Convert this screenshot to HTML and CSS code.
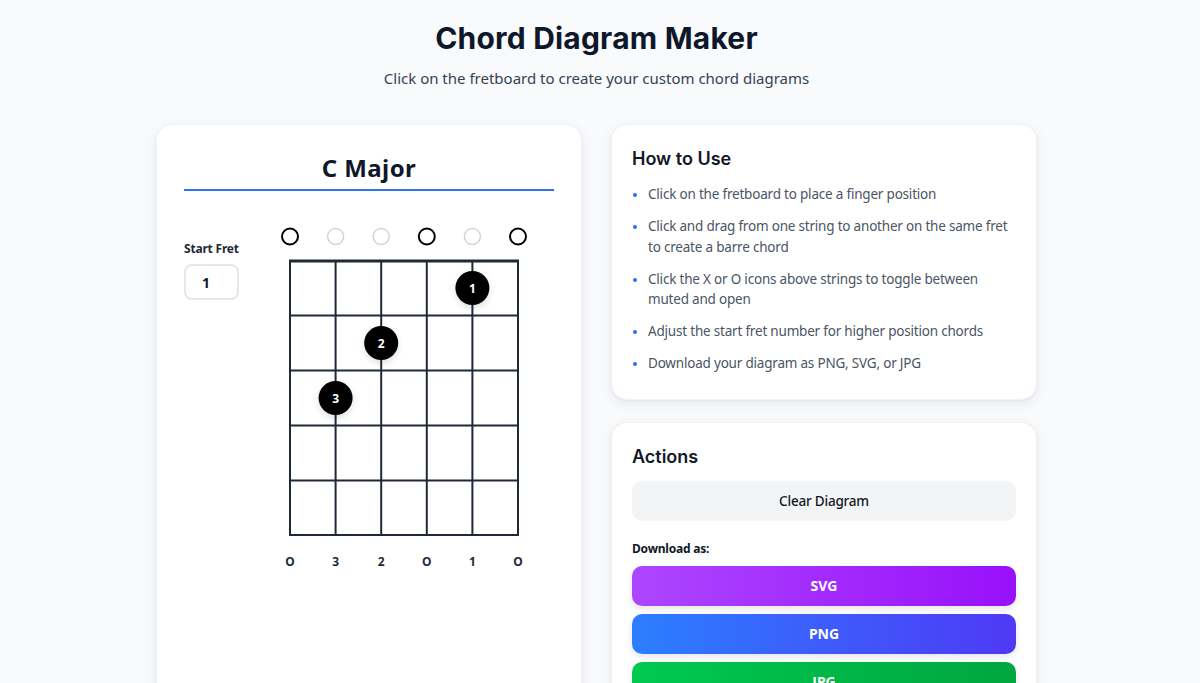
FILE: index.html
```html
<!DOCTYPE html>
<html lang="en">
<head>
<meta charset="utf-8">
<title>Chord Diagram Maker</title>
<link rel="stylesheet" href="styles.css">
</head>
<body>
<div class="page">
  <header class="hero">
    <h1 class="hero-title">Chord Diagram Maker</h1>
    <p class="hero-sub">Click on the fretboard to create your custom chord diagrams</p>
  </header>
  <main class="layout">
    <section class="card card-diagram">
      <h2 class="chord-name">C Major</h2>
      <div class="diagram-row">
        <div class="fret-control">
          <label class="fret-label" for="startFret">Start Fret</label>
          <input class="fret-input" id="startFret" type="text" value="1">
        </div>
        <svg class="fretboard" width="270" height="360" viewBox="0 0 270 360" xmlns="http://www.w3.org/2000/svg">
          <defs>
            <filter id="dotShadow" x="-50%" y="-50%" width="200%" height="200%">
              <feDropShadow dx="0" dy="3" stdDeviation="3" flood-color="#000" flood-opacity="0.12"/>
            </filter>
          </defs>
          <g class="open-marks">
            <circle cx="20" cy="16.5" r="8" fill="none" stroke="#000" stroke-width="2"/>
            <circle cx="65.6" cy="16.5" r="8" fill="none" stroke="#d1d5db" stroke-width="1.5"/>
            <circle cx="111.2" cy="16.5" r="8" fill="none" stroke="#d1d5db" stroke-width="1.5"/>
            <circle cx="156.8" cy="16.5" r="8" fill="none" stroke="#000" stroke-width="2"/>
            <circle cx="202.4" cy="16.5" r="8" fill="none" stroke="#d1d5db" stroke-width="1.5"/>
            <circle cx="248" cy="16.5" r="8" fill="none" stroke="#000" stroke-width="2"/>
          </g>
          <g stroke="#1f2937" stroke-width="2">
            <line x1="20" y1="41" x2="20" y2="316"/>
            <line x1="65.6" y1="41" x2="65.6" y2="316"/>
            <line x1="111.2" y1="41" x2="111.2" y2="316"/>
            <line x1="156.8" y1="41" x2="156.8" y2="316"/>
            <line x1="202.4" y1="41" x2="202.4" y2="316"/>
            <line x1="248" y1="41" x2="248" y2="316"/>
            <line x1="19" y1="95.5" x2="249" y2="95.5"/>
            <line x1="19" y1="150.5" x2="249" y2="150.5"/>
            <line x1="19" y1="205.5" x2="249" y2="205.5"/>
            <line x1="19" y1="260.5" x2="249" y2="260.5"/>
            <line x1="19" y1="315" x2="249" y2="315"/>
            <line x1="19" y1="41" x2="249" y2="41" stroke-width="3"/>
          </g>
          <g filter="url(#dotShadow)">
            <circle cx="202.4" cy="68" r="17" fill="#000"/>
            <circle cx="111.2" cy="123" r="17" fill="#000"/>
            <circle cx="65.6" cy="178" r="17" fill="#000"/>
          </g>
          <g class="dot-text">
            <text x="202.4" y="68">1</text>
            <text x="111.2" y="123">2</text>
            <text x="65.6" y="178">3</text>
          </g>
          <g class="string-labels">
            <text x="20" y="341">O</text>
            <text x="65.6" y="341">3</text>
            <text x="111.2" y="341">2</text>
            <text x="156.8" y="341">O</text>
            <text x="202.4" y="341">1</text>
            <text x="248" y="341">O</text>
          </g>
        </svg>
      </div>
    </section>
    <div class="side">
      <section class="card card-side card-help">
        <h3 class="side-title">How to Use</h3>
        <ul class="steps">
          <li class="step">Click on the fretboard to place a finger position</li>
          <li class="step">Click and drag from one string to another on the same fret to create a barre chord</li>
          <li class="step">Click the X or O icons above strings to toggle between muted and open</li>
          <li class="step">Adjust the start fret number for higher position chords</li>
          <li class="step">Download your diagram as PNG, SVG, or JPG</li>
        </ul>
      </section>
      <section class="card card-side">
        <h3 class="side-title">Actions</h3>
        <button class="btn btn-clear" type="button">Clear Diagram</button>
        <p class="download-label">Download as:</p>
        <div class="downloads">
          <button class="btn btn-dl btn-svg" type="button">SVG</button>
          <button class="btn btn-dl btn-png" type="button">PNG</button>
          <button class="btn btn-dl btn-jpg" type="button">JPG</button>
        </div>
      </section>
    </div>
  </main>
</div>
</body>
</html>
```
FILE: styles.css
```css
* { box-sizing: border-box; }

html, body {
  margin: 0;
  padding: 0;
  background: #f8fafc;
}

body {
  font-family: "Noto Sans", "Open Sans", sans-serif;
  color: #1f2937;
  padding-right: 7px;
}

.page {
  width: 881px;
  margin: 0 auto;
  padding-top: 20px;
}

.hero {
  text-align: center;
}

.hero-title {
  margin: 0;
  font-family: "Inter", "Lato", sans-serif;
  font-weight: 700;
  font-size: 30px;
  line-height: 36px;
  color: #0f172a;
  letter-spacing: 0.2px;
}

.hero-sub {
  margin: 10px 0 0;
  font-size: 15px;
  line-height: 24px;
  color: #374151;
}

.layout {
  margin-top: 34px;
  display: grid;
  grid-template-columns: 426px 426px;
  gap: 29px;
}

.card {
  background: #ffffff;
  border: 1px solid #f1f3f6;
  border-radius: 16px;
  box-shadow: 0 4px 14px rgba(15, 23, 42, 0.07), 0 1px 3px rgba(15, 23, 42, 0.05);
}

.card-diagram {
  padding: 27px 27px 28px;
}

.chord-name {
  margin: 0;
  text-align: center;
  font-size: 24px;
  line-height: 32px;
  font-weight: 700;
  color: #0f172a;
  letter-spacing: 0.4px;
  padding-bottom: 5px;
  border-bottom: 2px solid #2f74ee;
}

.diagram-row {
  margin-top: 29px;
  display: flex;
  align-items: flex-start;
  gap: 30px;
}

.fret-control {
  width: 56px;
  padding-top: 21px;
  display: flex;
  flex-direction: column;
}

.fret-label {
  font-size: 12px;
  line-height: 16px;
  font-weight: 700;
  color: #1f2937;
  white-space: nowrap;
  letter-spacing: -0.2px;
}

.fret-input {
  margin-top: 7px;
  width: 55px;
  height: 36px;
  border: 2px solid #e5e7eb;
  border-radius: 8px;
  padding: 0 0 0 16px;
  font-family: "Noto Sans", sans-serif;
  font-size: 14px;
  font-weight: 700;
  color: #111827;
  background: #fff;
  outline: none;
}

.fretboard {
  display: block;
  flex: none;
}

.dot-text text {
  fill: #ffffff;
  font-family: "Noto Sans", sans-serif;
  font-size: 12px;
  font-weight: 700;
  text-anchor: middle;
  dominant-baseline: central;
}

.string-labels text {
  fill: #1f2937;
  font-family: "Noto Sans", sans-serif;
  font-size: 12px;
  font-weight: 700;
  text-anchor: middle;
  dominant-baseline: central;
}

.side {
  display: flex;
  flex-direction: column;
  gap: 22px;
}

.card-side {
  padding: 20px;
}

.card-help {
  padding-bottom: 25px;
}

.side-title {
  margin: 0;
  font-family: "Inter", "Lato", sans-serif;
  font-size: 18px;
  line-height: 28px;
  font-weight: 600;
  color: #111827;
}

.steps {
  list-style: none;
  margin: 11px 0 0;
  padding: 0;
  display: flex;
  flex-direction: column;
  gap: 11.5px;
}

.step {
  position: relative;
  padding-left: 16px;
  font-size: 13.5px;
  line-height: 20.5px;
  letter-spacing: -0.2px;
  color: #4b5563;
}

.step::before {
  content: "";
  position: absolute;
  left: 1px;
  top: 9px;
  width: 4px;
  height: 4px;
  border-radius: 50%;
  background: #2b6ff5;
}

.btn {
  display: block;
  width: 100%;
  height: 40px;
  border: none;
  border-radius: 10px;
  font-family: "Noto Sans", sans-serif;
  font-size: 14px;
  cursor: pointer;
}

.btn-clear {
  margin-top: 10px;
  background: #f3f4f6;
  color: #111827;
  font-weight: 500;
  font-size: 13.5px;
  letter-spacing: -0.2px;
}

.download-label {
  margin: 20px 0 0;
  font-size: 12px;
  line-height: 16px;
  font-weight: 700;
  color: #111827;
  letter-spacing: -0.2px;
}

.downloads {
  margin-top: 9px;
  display: flex;
  flex-direction: column;
  gap: 8px;
}

.btn-dl {
  color: #ffffff;
  font-weight: 700;
  box-shadow: 0 3px 6px rgba(15, 23, 42, 0.1);
}

.btn-svg { background: linear-gradient(90deg, #ad46ff, #9810fa); }
.btn-png { background: linear-gradient(90deg, #2b7fff, #4f39f6); }
.btn-jpg { background: linear-gradient(90deg, #00c950, #00a63e); }
```
